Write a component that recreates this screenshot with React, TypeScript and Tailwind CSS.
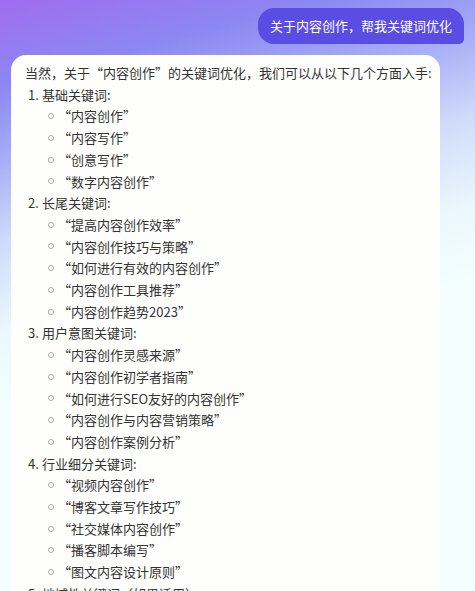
import React from 'react';

const sections = [
  { title: '基础关键词:', items: ['内容创作', '内容写作', '创意写作', '数字内容创作'] },
  {
    title: '长尾关键词:',
    items: ['提高内容创作效率', '内容创作技巧与策略', '如何进行有效的内容创作', '内容创作工具推荐', '内容创作趋势2023'],
  },
  {
    title: '用户意图关键词:',
    items: ['内容创作灵感来源', '内容创作初学者指南', '如何进行SEO友好的内容创作', '内容创作与内容营销策略', '内容创作案例分析'],
  },
  {
    title: '行业细分关键词:',
    items: ['视频内容创作', '博客文章写作技巧', '社交媒体内容创作', '播客脚本编写', '图文内容设计原则'],
  },
  { title: '地域性关键词（如果适用）:', items: [] as string[] },
];

export default function App() {
  return (
    <div
      className="h-[591px] w-full overflow-hidden bg-[linear-gradient(165deg,#a06cf0_0%,#8c88f2_12%,#a6acf6_22%,#cfdcfa_34%,#eaf7fc_46%,#f4fffd_58%,#f4fffd_100%)]"
      style={{ fontFamily: '"Noto Sans CJK SC", "Noto Sans", sans-serif' }}
    >
      <div className="flex justify-end pt-2 pr-[11px]">
        <div className="rounded-[16px] rounded-br-[5px] bg-[#5a4de4] px-[12px] h-[36px] flex items-center text-[13px] text-white">
          关于内容创作，帮我关键词优化
        </div>
      </div>

      <div className="mt-[11px] ml-[11px] w-[429px] rounded-t-[15px] bg-[#fefffd] pl-[14px] pt-[7px] pb-6 text-[13px] leading-[21.7px] text-[#333]">
        <div>当然，关于“内容创作”的关键词优化，我们可以从以下几个方面入手:</div>
        {sections.map((s, i) => (
          <div key={s.title}>
            <div className="flex pl-[3px]">
              <span className="w-[14px]">{i + 1}.</span>
              <span>{s.title}</span>
            </div>
            {s.items.map((it) => (
              <div key={it} className="flex items-center pl-[23px]">
                <span className="mr-[4px] h-[6px] w-[6px] rounded-full border border-[#aaa]" />
                <span>“{it}”</span>
              </div>
            ))}
          </div>
        ))}
      </div>
    </div>
  );
}
